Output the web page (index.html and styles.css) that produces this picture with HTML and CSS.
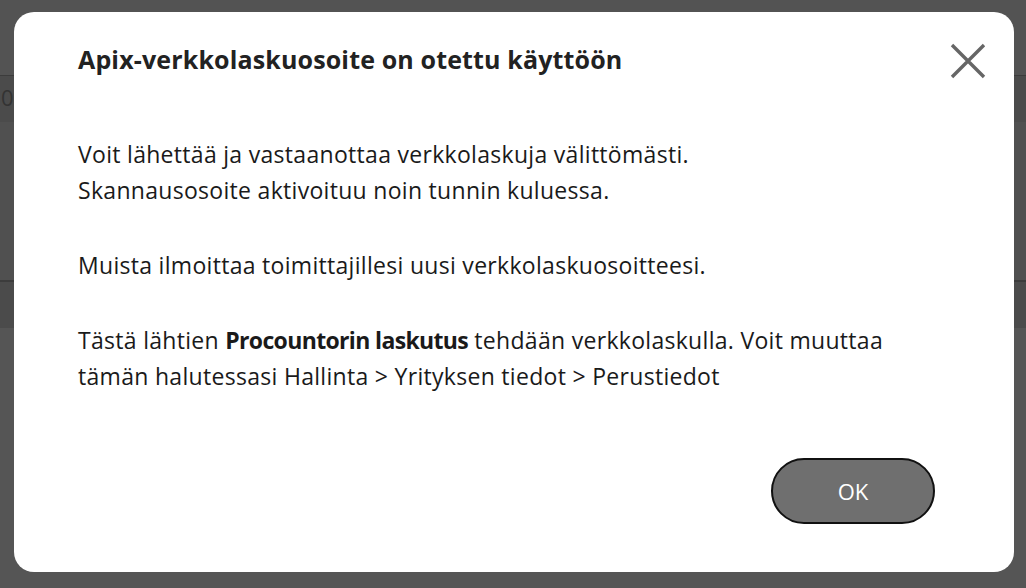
FILE: index.html
```html
<!DOCTYPE html>
<html lang="fi">
<head>
  <meta charset="UTF-8">
  <meta name="viewport" content="width=device-width, initial-scale=1.0">
  <title>Apix-verkkolaskuosoite</title>
  <link rel="stylesheet" href="styles.css">
</head>
<body>
  <div class="page">
    <div class="page-head"></div>
    <div class="page-row page-row-dark"><span class="cell">0</span></div>
    <div class="page-body"></div>
    <div class="page-row page-row-dark"></div>
  </div>

  <div class="overlay">
    <div class="modal" role="dialog" aria-labelledby="modal-title">
      <div class="modal-header">
        <h2 class="modal-title" id="modal-title">Apix-verkkolaskuosoite on otettu käyttöön</h2>
        <button class="modal-close" aria-label="Sulje">
          <svg width="36" height="36" viewBox="0 0 36 36">
            <path d="M2 2 L34 34 M34 2 L2 34" stroke="#666" stroke-width="3.4" fill="none"/>
          </svg>
        </button>
      </div>
      <div class="modal-body">
        <p>Voit lähettää ja vastaanottaa verkkolaskuja välittömästi.<br>Skannausosoite aktivoituu noin tunnin kuluessa.</p>
        <p>Muista ilmoittaa toimittajillesi uusi verkkolaskuosoitteesi.</p>
        <p>Tästä lähtien <strong>Procountorin laskutus</strong> tehdään verkkolaskulla. Voit muuttaa<br>tämän halutessasi Hallinta &gt; Yrityksen tiedot &gt; Perustiedot</p>
      </div>
      <div class="modal-footer">
        <button class="btn-ok">OK</button>
      </div>
    </div>
  </div>
</body>
</html>
```

FILE: styles.css
```css
* {
  margin: 0;
  padding: 0;
  box-sizing: border-box;
}

body {
  width: 100vw;
  height: 100vh;
  font-family: "Open Sans", "Liberation Sans", sans-serif;
  background-color: #555;
  overflow: hidden;
}

/* page behind the dialog */
.page-head {
  height: 76px;
  background-color: #535353;
  border-bottom: 1px solid #3c3c3c;
}

.page-row {
  height: 46px;
}

.page-row-dark {
  background-color: #4b4b4b;
}

.cell {
  display: block;
  padding: 6px 0 0 1px;
  font-size: 22px;
  color: #333;
}

.page-body {
  height: 160px;
  background-color: #505050;
  border-bottom: 2px solid #3c3c3c;
}

/* dialog */
.overlay {
  position: fixed;
  inset: 0;
  padding: 12px 12px 16px 14px;
}

.modal {
  width: 1000px;
  height: 560px;
  background-color: #fff;
  border-radius: 20px;
  padding: 30px 28px 48px 64px;
  display: flex;
  flex-direction: column;
  color: #1a1a1a;
}

.modal-header {
  display: flex;
  justify-content: space-between;
  align-items: flex-start;
}

.modal-title {
  font-size: 25px;
  font-weight: 700;
  line-height: 1.4;
  letter-spacing: 0.15px;
  color: #222;
}

.modal-close {
  border: none;
  background: none;
  cursor: pointer;
  margin-top: 1px;
}

.modal-body {
  flex: 1;
  margin-top: 54px;
  font-size: 23px;
  letter-spacing: 0.3px;
  line-height: 36px;
}

.modal-body p {
  margin-bottom: 39px;
}

.modal-body strong {
  font-weight: 700;
  letter-spacing: -0.65px;
}

.modal-footer {
  display: flex;
  justify-content: flex-end;
  padding-right: 51px;
}

.btn-ok {
  width: 164px;
  height: 66px;
  border: 2px solid #111;
  border-radius: 33px;
  background-color: #6f6f6f;
  color: #fff;
  font-family: inherit;
  font-size: 22px;
  font-weight: 500;
  cursor: pointer;
}
```
